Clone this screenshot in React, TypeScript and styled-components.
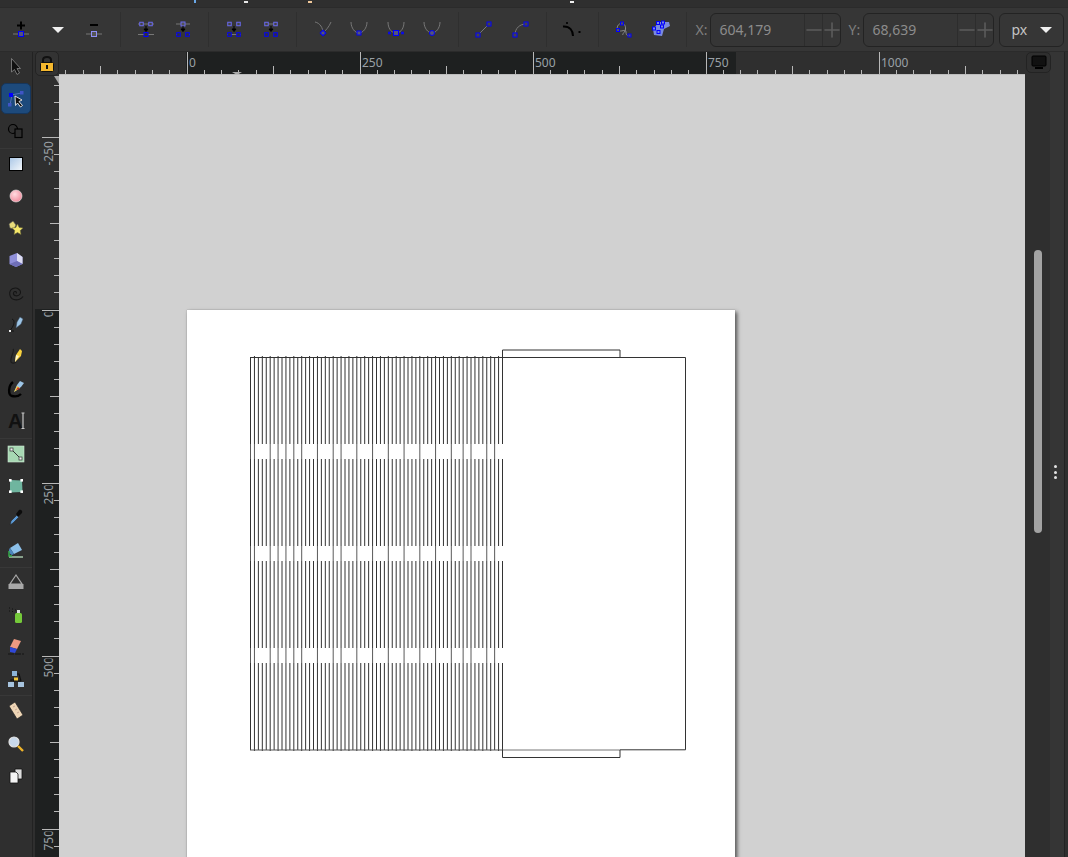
import { ReactNode } from 'react';
import styled, { createGlobalStyle } from 'styled-components';
import { Minus, Plus } from 'lucide-react';

const GlobalStyle = createGlobalStyle`
  html, body {
    margin: 0;
    padding: 0;
    height: 100%;
    overflow: hidden;
    background: #2f2f2f;
  }
  #root {
    height: 100%;
  }
`;

const Window = styled.div`
  display: flex;
  flex-direction: column;
  height: 857px;
  overflow: hidden;
  font-family: 'Noto Sans', 'Open Sans', sans-serif;
  background: #2f2f2f;
`;

const TitleStrip = styled.svg`
  display: block;
  flex: none;
  width: 100%;
  height: 7px;
  background: #2f2f2f;
`;

const Toolbar = styled.div`
  display: flex;
  align-items: center;
  flex: none;
  height: 45px;
  padding: 0 3px 0 2.6px;
  box-sizing: border-box;
  background: #363636;
  border-top: 1px solid #2b2b2b;
  border-bottom: 1px solid #2b2b2b;
`;

const ToolGroup = styled.div`
  display: flex;
  align-items: center;
`;

const ToolButton = styled.div`
  display: flex;
  align-items: center;
  justify-content: center;
  width: 36.67px;
  height: 28px;
`;

const Separator = styled.div`
  width: 1px;
  height: 35px;
  margin: 0 7px;
  background: #2f2f2f;
`;

const CoordLabel = styled.span<{ $width: number }>`
  width: ${(p) => p.$width}px;
  padding-left: ${(p) => p.$width - 15}px;
  box-sizing: border-box;
  font-size: 14px;
  color: #7f7f7f;
`;

const CoordField = styled.div`
  display: flex;
  align-items: stretch;
  width: 131px;
  height: 34px;
  box-sizing: border-box;
  background: #363636;
  border: 1px solid #232323;
  border-radius: 6px;
`;

const CoordValue = styled.div`
  flex: 1;
  display: flex;
  align-items: center;
  padding-left: 8px;
  font-size: 14px;
  color: #8c8c8c;
`;

const Stepper = styled.div`
  display: flex;
  align-items: center;
  justify-content: center;
  width: 17px;
  color: #5c5c5c;
  border-left: 1px solid #2d2d2d;

  svg {
    flex: none;
  }
`;

const UnitSelect = styled.div`
  display: flex;
  align-items: center;
  justify-content: space-between;
  width: 65px;
  height: 34px;
  margin-left: 5px;
  padding: 0 11px;
  box-sizing: border-box;
  font-size: 14px;
  color: #c4c4c4;
  border: 1px solid #232323;
  border-radius: 6px;
`;

const DownCaret = styled.div`
  width: 0;
  height: 0;
  border-left: 6px solid transparent;
  border-right: 6px solid transparent;
  border-top: 6px solid #f0f0f0;
`;

const Main = styled.div`
  flex: 1;
  display: flex;
  min-height: 0;
`;

const ToolColumn = styled.div`
  flex: none;
  width: 33px;
  box-sizing: border-box;
  background: #2f2f2f;
  border-right: 1px solid #222;
`;

const ToolSlot = styled.div<{ $active?: boolean; $divider?: boolean }>`
  display: flex;
  align-items: center;
  justify-content: center;
  height: 32.22px;
  padding-bottom: 2px;
  box-sizing: border-box;
  border-bottom: ${(p) => (p.$divider ? '1px solid #383838' : 'none')};
  position: relative;

  ${(p) =>
    p.$active &&
    `
    &::before {
      content: '';
      position: absolute;
      left: 1px;
      right: 1px;
      top: -1px;
      bottom: 2px;
      background: #1d4a7c;
      border: 1px solid #16365c;
      border-radius: 5px;
    }
  `}

  svg {
    position: relative;
  }
`;

const Workspace = styled.div`
  flex: 1;
  display: grid;
  grid-template-columns: 24px 966px;
  grid-template-rows: 23px 1fr;
  margin-left: 2px;
  min-width: 0;
  min-height: 0;
`;

const LockButton = styled.div`
  display: flex;
  align-items: center;
  justify-content: center;
  height: 25px;
  margin-top: -1px;
  box-sizing: border-box;
  background: #333;
  border: 1px solid #232323;
  border-radius: 5px;
  position: relative;
  z-index: 1;
`;

const RulerSvg = styled.svg`
  display: block;
  font-family: 'Noto Sans', 'Open Sans', sans-serif;
  font-size: 12px;
`;

const Canvas = styled.div`
  position: relative;
  background: #d1d1d1;
  overflow: hidden;
`;

const Page = styled.div`
  position: absolute;
  left: 128px;
  top: 235px;
  width: 548px;
  height: 640px;
  background: #fff;
  box-shadow: 0 0 1px #8d8d8d, 2px 2px 4px rgba(0, 0, 0, 0.65);
`;

const Drawing = styled.svg`
  display: block;
`;

const SidePanel = styled.div`
  flex: none;
  display: flex;
  width: 43px;
  background: #2f2f2f;
  position: relative;
`;

const MonitorButton = styled.div`
  display: flex;
  align-items: center;
  justify-content: center;
  position: absolute;
  left: 1px;
  top: 0;
  width: 25px;
  height: 21px;
  box-sizing: border-box;
  border: 1px solid #232323;
  border-radius: 5px;
`;

const ScrollTrack = styled.div`
  flex: none;
  width: 25px;
  padding: 198px 0 0 9px;
  box-sizing: border-box;
`;

const ScrollThumb = styled.div`
  width: 8px;
  height: 283px;
  background: #a3a3a3;
  border-radius: 4px;
`;

const DockHandle = styled.div`
  flex: 1;
  display: flex;
  flex-direction: column;
  align-items: center;
  gap: 2.5px;
  padding-top: 413px;
  padding-right: 4px;
  box-sizing: border-box;
  background: #353535;
  border-right: 1px solid #232323;
  margin-right: 3px;
`;

const DockDot = styled.div`
  width: 3px;
  height: 3px;
  flex: none;
  background: #e4e4e4;
  border-radius: 50%;
`;

/* ---- toolbar icon bits ---- */

const BLUE = '#0000ff';
const PALE = '#6a6af0';
const GREY = '#777';

const Node = ({ x, y, s = 5, c = BLUE, f = '#55557a' }: { x: number; y: number; s?: number; c?: string; f?: string }) => (
  <rect x={x - s / 2} y={y - s / 2} width={s} height={s} fill={f} stroke={c} strokeWidth="1" />
);

const Down = ({ y }: { y: number }) => (
  <path d={`M0 ${y - 3}V${y + 1}M-2 ${y}L0 ${y + 2.5}L2 ${y}Z`} stroke="#000" strokeWidth="1" fill="#000" />
);

const Glyph = ({ children }: { children: ReactNode }) => (
  <svg width="36" height="28" viewBox="-18 -14 36 28" fill="none">
    {children}
  </svg>
);

const UCurve = () => <path d="M-8 -8C-8 -2 -4 3 0 3S8 -2 8 -8" stroke={GREY} strokeWidth="1" />;

const topIcons: Record<string, ReactNode> = {
  add: (
    <>
      <path d="M-4 -4.5H4M0 -8.5V-0.5" stroke="#000" strokeWidth="2" />
      <path d="M-8 4H8" stroke={GREY} />
      <Node x={0} y={4} s={5} />
    </>
  ),
  remove: (
    <>
      <path d="M-4 -5H4" stroke="#000" strokeWidth="2" />
      <path d="M-8 4H8" stroke={GREY} />
      <Node x={0} y={4} s={5} c="#8f8ff5" f="#555" />
    </>
  ),
  joinNodes: (
    <>
      <path d="M-8 -6H8M-8 4.5H8" stroke={GREY} />
      <Node x={-4.5} y={-6} s={3.5} c={PALE} f="#444" />
      <Node x={4.5} y={-6} s={3.5} c={PALE} f="#444" />
      <Down y={-1} />
      <Node x={0} y={4.5} s={4} f="#333" />
    </>
  ),
  breakNode: (
    <>
      <path d="M-7 -6H7M-7 4.5H-4M4 4.5H7" stroke={GREY} />
      <Node x={0} y={-6} s={4} c={PALE} f="#555" />
      <Down y={-1} />
      <Node x={-4.5} y={4.5} s={3.5} f="#333" />
      <Node x={4.5} y={4.5} s={3.5} f="#333" />
    </>
  ),
  joinSegment: (
    <>
      <path d="M-7 4.5H7" stroke={GREY} />
      <Node x={-4.5} y={-6} s={3.5} c={PALE} f="#444" />
      <Node x={4.5} y={-6} s={3.5} c={PALE} f="#444" />
      <Down y={-1} />
      <Node x={-4.5} y={4.5} s={3.5} f="#333" />
      <Node x={4.5} y={4.5} s={3.5} f="#333" />
    </>
  ),
  deleteSegment: (
    <>
      <path d="M-4 -6H4" stroke={GREY} />
      <Node x={-4.5} y={-6} s={3.5} c={PALE} f="#444" />
      <Node x={4.5} y={-6} s={3.5} c={PALE} f="#444" />
      <Down y={-1} />
      <Node x={-4.5} y={4.5} s={3.5} f="#333" />
      <Node x={4.5} y={4.5} s={3.5} f="#333" />
    </>
  ),
  cusp: (
    <>
      <path d="M-8 -8C-3 -7 0 -2 0 3M8 -8C6 -3 3 0 0 3" stroke={GREY} />
      <rect x={-2} y={1} width={4} height={4} transform="rotate(45 0 3)" fill="#55557a" stroke={BLUE} />
    </>
  ),
  smooth: (
    <>
      <UCurve />
      <Node x={0} y={3} s={4} />
    </>
  ),
  symmetric: (
    <>
      <path d="M-8 -8C-8 -2 -5 2 -2 2.5M8 -8C8 -2 5 2 2 2.5" stroke={GREY} />
      <Node x={0} y={3} s={5} />
      <Node x={-6.5} y={3} s={1.6} />
      <Node x={6.5} y={3} s={1.6} />
    </>
  ),
  auto: (
    <>
      <UCurve />
      <circle cx={0} cy={3} r={2.5} fill="#55557a" stroke={BLUE} />
    </>
  ),
  line: (
    <>
      <path d="M-6 5L5 -6" stroke={GREY} />
      <Node x={-6} y={5} s={4} f="#444" />
      <Node x={5} y={-6} s={4} f="#444" />
    </>
  ),
  curve: (
    <>
      <path d="M-6 5C-6 -2 -1 -6 5 -6" stroke={GREY} />
      <Node x={-6} y={5} s={4} f="#444" />
      <Node x={5} y={-6} s={4} f="#444" />
    </>
  ),
  toObject: (
    <>
      <path d="M-9 -3.5C-2 -4 1 1 1 6" stroke="#000" strokeWidth="2" />
      <rect x={6.5} y={1} width={2} height={2} fill="#000" />
      <rect x={-5.8} y={-8} width={1.6} height={2} fill="#000" />
    </>
  ),
  clipPath: (
    <>
      <path d="M-2 -6.5C-6 -7 -8 -2 -6 0C-3 3 2 -2 2 2C2 6 4 6 5.5 5.5" stroke="#8a8a8a" />
      <path d="M-2 -6.5C2 -6 2 -1 1 1C0 3 -2 4 -1 5" stroke="#8a8a8a" />
      <Node x={-2} y={-6.5} s={3} f="#555" />
      <Node x={-6} y={0} s={3} f="#555" />
      <Node x={5.5} y={5.5} s={3} f="#555" />
    </>
  ),
  mask: (
    <>
      <path d="M-8 -1L-2 -8L8 -8L9 -4L3 -1L1 6L-7 5Z" fill="#7a8ae0" />
      <Node x={-7} y={-1.5} s={3} f="#7a8ae0" />
      <Node x={-3} y={-7} s={3} f="#7a8ae0" />
      <Node x={1} y={-3.5} s={3} f="#7a8ae0" />
      <Node x={-2.5} y={2} s={3} f="#7a8ae0" />
      <Node x={2} y={-7.5} s={3} f="#7a8ae0" />
    </>
  ),
};

const toolbarGroups: (string | null)[][] = [
  ['add', null, 'remove'],
  ['joinNodes', 'breakNode'],
  ['joinSegment', 'deleteSegment'],
  ['cusp', 'smooth', 'symmetric', 'auto'],
  ['line', 'curve'],
  ['toObject'],
  ['clipPath', 'mask'],
];

/* ---- left tool column ---- */

const ToolIcon = ({ children }: { children: ReactNode }) => (
  <svg width="24" height="24" viewBox="-12 -12 24 24" fill="none">
    {children}
  </svg>
);

const sideTools: { key: string; divider?: boolean; active?: boolean; icon: ReactNode }[] = [
  {
    key: 'selector',
    icon: <path d="M-4.5 -8.5V5L-1.5 2.5L1 7.5L3.5 6L1 1.5H4.5Z" fill="#111" stroke="#888" strokeWidth="0.8" />,
  },
  {
    key: 'node',
    active: true,
    icon: (
      <>
        <path d="M-5 -4L5.5 -6M-4 -4L-6 6" stroke="#4d6fb8" />
        <rect x={-7} y={-6} width={4} height={4} fill="#0000ff" />
        <rect x={4} y={-8} width={3.5} height={3.5} fill="#3f55c5" />
        <rect x={-8} y={4} width={3.5} height={3.5} fill="#3f55c5" />
        <path d="M-1 -3L6 1L3 2.5L6.5 6.5L4.5 8L1.5 4L-0.5 6.5Z" fill="#111" stroke="#eee" strokeWidth="0.9" />
      </>
    ),
  },
  {
    key: 'shape',
    divider: true,
    icon: (
      <>
        <circle cx={-3} cy={-2} r={4.5} stroke="#000" strokeWidth="1.2" />
        <rect x={-1} y={-2} width={7} height={8.5} stroke="#000" strokeWidth="1.2" fill="#2f2f2f" />
      </>
    ),
  },
  {
    key: 'rect',
    icon: (
      <>
        <defs>
          <linearGradient id="rectFill" x1="0" y1="0" x2="1" y2="1">
            <stop offset="0" stopColor="#a9c6e6" />
            <stop offset="1" stopColor="#f5f8fb" />
          </linearGradient>
        </defs>
        <rect x={-6.5} y={-6.5} width={13} height={13} fill="url(#rectFill)" stroke="#000" />
      </>
    ),
  },
  {
    key: 'ellipse',
    icon: (
      <>
        <defs>
          <radialGradient id="ballFill" cx="0.4" cy="0.35" r="0.7">
            <stop offset="0" stopColor="#ffdbe0" />
            <stop offset="1" stopColor="#f08a9c" />
          </radialGradient>
        </defs>
        <circle r={6} fill="url(#ballFill)" stroke="#eee" strokeWidth="0.6" />
      </>
    ),
  },
  {
    key: 'star',
    icon: (
      <>
        <path d="M-7 -4L-3 -7L0 -3L-2 1L-6 0Z" fill="#e8dc7a" stroke="#555" strokeWidth="0.6" />
        <path d="M1.5 -4L3.2 -0.5L7 0L4.2 2.6L5 6.5L1.5 4.6L-2 6.5L-1.2 2.6L-4 0L-0.2 -0.5Z" fill="#f7e96b" stroke="#6d6a3a" strokeWidth="0.6" />
      </>
    ),
  },
  {
    key: 'box',
    icon: (
      <>
        <path d="M-6.5 -4L1 -7L6.5 -3V4L0 7L-6.5 4Z" fill="#8f8fd9" />
        <path d="M1 -7L6.5 -3V4L1 1Z" fill="#ddddf3" />
        <path d="M-6.5 4L1 1L6.5 4L0 7Z" fill="#6f6fb8" />
      </>
    ),
  },
  {
    key: 'spiral',
    icon: (
      <path
        d="M0 0.5C1.5 -1.5 -2 -2.5 -2.5 0C-3 3 2 4 4 1C6 -3 1 -6 -3 -4.5C-8 -2.5 -7 5 -2 6.5C1 7.5 5 6.5 7 3.5"
        stroke="#151515"
        strokeWidth="1.1"
      />
    ),
  },
  {
    key: 'pencil',
    icon: (
      <>
        <path d="M-4 -6C-1 -5 -2 -1 -3 1C-4 3 -6 6 -7 6H-2" stroke="#111" strokeWidth="0.9" />
        <path d="M0 3L1 -3L4 -8L7 -6L5 -1Z" fill="#9dc5e6" stroke="#3d5166" strokeWidth="0.5" />
        <rect x={-7} y={5} width={2} height={2} fill="#eee" />
      </>
    ),
  },
  {
    key: 'pen',
    icon: (
      <>
        <path d="M-3 -8C-1 -6 -6 0 -5 5C-4 7 -1 6 0 5" stroke="#1c1c1c" strokeWidth="1.2" />
        <path d="M-1 5L0 -2L4 -8L6 -6L5 -1Z" fill="#f8d23f" />
        <path d="M-1 5L0 -2L3 -1Z" fill="#fff6c8" />
      </>
    ),
  },
  {
    key: 'calligraphy',
    icon: (
      <>
        <path d="M-3 -7C-8 -3 -8 6 -4 7C0 8 3 7 5 5" stroke="#000" strokeWidth="2.4" />
        <path d="M-2 3L1 -4L4 -8L8 -6L5 -2Z" fill="#9dc5e6" />
        <path d="M-2 3L1 -3L4 -1Z" fill="#f8d23f" />
        <path d="M0 1L2 -2L4 0Z" fill="#c72e2e" />
      </>
    ),
  },
  {
    key: 'text',
    divider: true,
    icon: (
      <>
        <text x={-8} y={7} fontFamily="'Liberation Sans', sans-serif" fontSize="20" fontWeight="700" fill="#111">
          A
        </text>
        <path d="M5.5 -8H8.5M7 -8V7.5M5.5 7.5H8.5" stroke="#c8c8c8" strokeWidth="1.2" />
      </>
    ),
  },
  {
    key: 'gradient',
    icon: (
      <>
        <rect x={-8} y={-8} width={16} height={16} fill="#a7d8b3" stroke="#cfe9d6" strokeWidth="0.6" />
        <path d="M-5 -5L5 5" stroke="#333" />
        <rect x={-6} y={-6} width={3} height={3} fill="#eee" stroke="#333" strokeWidth="0.7" />
        <rect x={3} y={3} width={3} height={3} fill="#eee" stroke="#333" strokeWidth="0.7" />
      </>
    ),
  },
  {
    key: 'mesh',
    icon: (
      <>
        <path d="M-6 -6L6 -5.5L6.5 6L-6 6.5Z" fill="#6fb59f" />
        <rect x={-7} y={-7} width={2.6} height={2.6} fill="#fff" />
        <rect x={4.4} y={-7} width={2.6} height={2.6} fill="#fff" />
        <rect x={-7} y={4.4} width={2.6} height={2.6} fill="#fff" />
        <rect x={4.4} y={4.4} width={2.6} height={2.6} fill="#fff" />
      </>
    ),
  },
  {
    key: 'dropper',
    icon: (
      <>
        <path d="M-6 7L-5 3L1 -3L3 -1L-3 5Z" fill="#5c9ad6" stroke="#222" strokeWidth="0.6" />
        <path d="M0 -4L3 -8C5 -9 7 -7 6 -5L2 -1Z" fill="#0c0c0c" />
      </>
    ),
  },
  {
    key: 'bucket',
    divider: true,
    icon: (
      <>
        <path d="M-6 -2L2 -7L6 0L-2 4Z" fill="#8cc0ea" />
        <path d="M-6 -2L-2 4L-4 5C-7 4 -8 0 -6 -2Z" fill="#4a86be" />
        <path d="M-7 7H7" stroke="#c5ecc9" strokeWidth="1.2" />
        <path d="M-7 1V6H-4" stroke="#37b24d" strokeWidth="1.4" />
      </>
    ),
  },
  {
    key: 'tweak',
    icon: (
      <>
        <path d="M-2 -5L0 -8L2 -5L6 1H-6Z" stroke="#aaa" strokeWidth="1.2" />
        <rect x={-7.5} y={1} width={15} height={5} fill="#a8a8a8" />
      </>
    ),
  },
  {
    key: 'spray',
    icon: (
      <>
        <rect x={-1} y={-2} width={7} height={10} rx={1.5} fill="#75c93a" />
        <rect x={1} y={-5} width={3} height={3} fill="#ddd" />
        <path d="M-7 -7H-6M-4 -6H-3M-7 -4H-6M-4 -3.5H-3M-1 -5H0" stroke="#111" strokeWidth="1.2" />
      </>
    ),
  },
  {
    key: 'eraser',
    icon: (
      <>
        <path d="M-2 -8L5 -6L1 2L-6 0Z" fill="#ef9a82" />
        <path d="M-6 0L1 2L-1 6L-6 5Z" fill="#3048d8" />
        <path d="M-8 7H8" stroke="#151515" strokeWidth="1" strokeDasharray="6 1" />
      </>
    ),
  },
  {
    key: 'connector',
    divider: true,
    icon: (
      <>
        <path d="M-3 -5H3L5 2M-5 2V1H0M-3 2H5" stroke="#111" strokeWidth="1.1" />
        <rect x={-4} y={-8} width={5} height={5} fill="#8cb4d8" />
        <rect x={-2} y={-1.5} width={4} height={3} fill="#f0c63c" />
        <rect x={-8} y={3} width={6} height={5} fill="#a7c4de" />
        <rect x={2} y={3} width={6} height={5} fill="#a7c4de" />
      </>
    ),
  },
  {
    key: 'measure',
    icon: (
      <>
        <path d="M-7 -5L-1 -9L7 4L1 8Z" fill="#eed5b5" stroke="#222" strokeWidth="0.7" />
        <path d="M-3 -4L-1 -5M-1 -1L1 -2M1 2L3 1" stroke="#b98" strokeWidth="0.8" />
      </>
    ),
  },
  {
    key: 'zoom',
    icon: (
      <>
        <circle cx={-2} cy={-2} r={5} fill="#c8d8ea" stroke="#e2e2e2" strokeWidth="1.2" />
        <path d="M2 2L7 7" stroke="#f0b429" strokeWidth="2.4" />
      </>
    ),
  },
  {
    key: 'pages',
    icon: (
      <>
        <path d="M-1 -7H6V3H-1Z" fill="#ddd" stroke="#111" strokeWidth="0.8" />
        <path d="M-6 -4H0L2 -2V7H-6Z" fill="#f4f4f4" stroke="#111" strokeWidth="0.8" />
      </>
    ),
  },
];

/* ---- rulers ---- */

const STEP = 17.3;
const H_ORIGIN = 186.5 - 59;
const V_TICK_ZERO = 309.5 - 75;
const range = (from: number, to: number) => Array.from({ length: to - from + 1 }, (_, i) => from + i);

const tickLength = (i: number) => (i % 10 === 0 ? 23 : i % 5 === 0 ? 9 : 5);

const HorizontalRuler = () => (
  <RulerSvg width={966} height={23}>
    <rect x={0} y={0} width={966} height={23} fill="#2f2f2f" />
    <rect x={127} y={0} width={550} height={23} fill="#1e2020" />
    {range(-7, 48).map((i) => {
      const x = Math.round(H_ORIGIN + i * STEP) + 0.5;
      return <line key={i} x1={x} x2={x} y1={23} y2={23 - tickLength(i)} stroke="#b8b8b8" />;
    })}
    {[0, 250, 500, 750, 1000].map((v, i) => (
      <text key={v} x={H_ORIGIN + i * 173 + 2.5} y={15} fill="#9aa0a6">
        {v}
      </text>
    ))}
    <path d="M173 20H183L178 23Z" fill="#a9a9a9" />
    <rect x={0} y={22} width={966} height={1} fill="#bdbdbd" />
  </RulerSvg>
);

const verticalLabels = [
  { value: -250, start: 29, clip: 0 },
  { value: 0, start: 7.8, clip: 3 },
  { value: 250, start: 22, clip: 3 },
  { value: 500, start: 22, clip: 3 },
  { value: 750, start: 22, clip: 3 },
];

// the zero of each label gets cut off where it meets the major tick, as in the app
const VerticalRuler = () => (
  <RulerSvg width={24} height={782}>
    <rect x={0} y={0} width={24} height={782} fill="#2f2f2f" />
    <rect x={0} y={234} width={24} height={548} fill="#1e2020" />
    <defs>
      {verticalLabels.map((l, i) => (
        <clipPath id={`labelClip${i}`} key={l.value}>
          <rect x={0} y={V_TICK_ZERO + (i - 1) * 173 + l.clip} width={24} height={40} />
        </clipPath>
      ))}
    </defs>
    {range(-13, 31).map((i) => {
      const y = Math.round(V_TICK_ZERO + i * STEP) + 0.5;
      return <line key={i} y1={y} y2={y} x1={24} x2={24 - (i % 10 === 0 ? 17 : i % 5 === 0 ? 9 : 5)} stroke="#b8b8b8" />;
    })}
    {verticalLabels.map((l, i) => {
      const y = V_TICK_ZERO + (i - 1) * 173;
      return (
        <g key={l.value} clipPath={`url(#labelClip${i})`}>
          <text transform={`translate(18 ${y + l.start}) rotate(-90)`} fill="#9aa0a6" fontSize="12">
            {l.value}
          </text>
        </g>
      );
    })}
    <path d="M19 1L24 1V9Z" fill="#a9a9a9" />
  </RulerSvg>
);

/* ---- page drawing ---- */

const LINE = '#333';
const BANDS = [
  [444, 459],
  [546, 561],
  [648, 663],
];
// lines that stay visible, paler, across the white bands
const THROUGH = new Set([0, 1, 5, 7, 9, 11, 13, 17, 21, 23, 27, 31, 35, 39, 43, 47, 51, 54, 56, 60, 62]);

const HatchLines = () => (
  <>
    {range(0, 64).map((i) => {
      const x = 250.5 + i * 3.9375;
      const top = i % 2 === 1 ? 356 : 357;
      const bottom = i % 2 === 1 ? 751 : 750;
      const stops = [top, ...BANDS.flat(), bottom];
      return (
        <g key={i}>
          {[0, 2, 4, 6].map((s) => (
            <line key={s} x1={x} x2={x} y1={stops[s]} y2={stops[s + 1]} stroke={LINE} />
          ))}
          {THROUGH.has(i) &&
            BANDS.map(([a, b]) => <line key={a} x1={x} x2={x} y1={a} y2={b} stroke="#5a5a5a" />)}
        </g>
      );
    })}
  </>
);

const PageDrawing = () => (
  <Drawing width={548} height={547} viewBox="187 310 548 547" fill="none">
    <rect x={503} y={358} width={182} height={391} fill="#fff" />
    <HatchLines />
    <path d="M250 357.5H685.5V749.8H620" stroke={LINE} />
    <path d="M250 750H502" stroke="#555" />
    <path d="M502.5 750H620" stroke="#777" />
    <path d="M502.5 357V350H620V357" stroke={LINE} />
    <path d="M620 750V757.5H502.5V750" stroke={LINE} />
  </Drawing>
);

const steppers = (
  <>
    <Stepper>
      <Minus size={24} strokeWidth={1.6} />
    </Stepper>
    <Stepper>
      <Plus size={24} strokeWidth={1.6} />
    </Stepper>
  </>
);

export default function App() {
  return (
    <Window>
      <GlobalStyle />
      <TitleStrip viewBox="0 0 1068 7">
        <rect x={194} y={0} width={2} height={3} fill="#6aa8e8" />
        <rect x={244} y={1} width={4} height={2} fill="#e8e8e8" />
        <rect x={308} y={1} width={4} height={2} fill="#f0c89a" />
        <rect x={570} y={1} width={4} height={2} fill="#f0f0f0" />
      </TitleStrip>
      <Toolbar>
        {toolbarGroups.map((group, g) => (
          <ToolGroup key={g}>
            {group.map((name, i) => (
              <ToolButton key={i}>{name ? <Glyph>{topIcons[name]}</Glyph> : <DownCaret />}</ToolButton>
            ))}
            <Separator />
          </ToolGroup>
        ))}
        <CoordLabel $width={16.4}>X:</CoordLabel>
        <CoordField>
          <CoordValue>604,179</CoordValue>
          {steppers}
        </CoordField>
        <CoordLabel $width={22}>Y:</CoordLabel>
        <CoordField>
          <CoordValue>68,639</CoordValue>
          {steppers}
        </CoordField>
        <UnitSelect>
          px
          <DownCaret />
        </UnitSelect>
      </Toolbar>
      <Main>
        <ToolColumn>
          {sideTools.map((tool) => (
            <ToolSlot key={tool.key} $active={tool.active} $divider={tool.divider}>
              <ToolIcon>{tool.icon}</ToolIcon>
            </ToolSlot>
          ))}
        </ToolColumn>
        <Workspace>
          <LockButton>
            <svg width="16" height="18" viewBox="0 0 16 18" fill="none">
              <path d="M4 8V5C4 1 12 1 12 5V8" stroke="#111" strokeWidth="2" />
              <rect x={1.5} y={7.5} width={13} height={9} rx={1} fill="#f5b82e" stroke="#111" />
              <rect x={7} y={10} width={2} height={4} fill="#111" />
            </svg>
          </LockButton>
          <HorizontalRuler />
          <VerticalRuler />
          <Canvas>
            <Page>
              <PageDrawing />
            </Page>
          </Canvas>
        </Workspace>
        <SidePanel>
          <MonitorButton>
            <svg width="16" height="15" viewBox="0 0 16 15" fill="none">
              <rect x={1} y={1} width={14} height={10} rx={1} fill="#111" stroke="#000" />
              <rect x={4} y={12} width={8} height={2} fill="#000" />
            </svg>
          </MonitorButton>
          <ScrollTrack>
            <ScrollThumb />
          </ScrollTrack>
          <DockHandle>
            <DockDot />
            <DockDot />
            <DockDot />
          </DockHandle>
        </SidePanel>
      </Main>
    </Window>
  );
}
